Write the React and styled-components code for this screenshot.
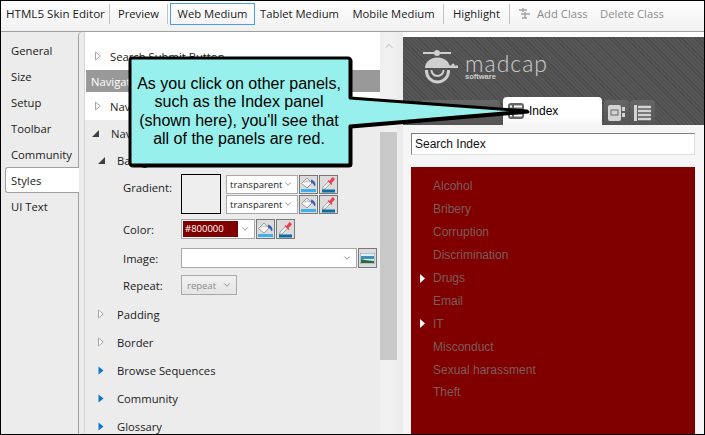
import React from "react";
import styled, { createGlobalStyle } from "styled-components";
import { ChevronDown, ChevronUp } from "lucide-react";

const uiFont = `"Open Sans", "Noto Sans", sans-serif`;
const webFont = `"Liberation Sans", Arial, sans-serif`;

const Global = createGlobalStyle`
	html, body {
		margin: 0;
		padding: 0;
		background: #fff;
	}
	* {
		box-sizing: border-box;
	}
`;

const Frame = styled.div`
	position: relative;
	width: 705px;
	height: 435px;
	display: flex;
	flex-direction: column;
	overflow: hidden;
	background: #ececec;
	border: 1px solid #000;
	font-family: ${uiFont};
	font-size: 11.25px;
	color: #1a1a1a;
	&::after {
		content: "";
		position: absolute;
		right: -1px;
		bottom: 0;
		width: 1px;
		height: 40px;
		background: #f5f5f5;
	}
`;

const Toolbar = styled.div`
	display: flex;
	align-items: center;
	height: 31px;
	flex: none;
	padding: 0 0 5px 5px;
	background: linear-gradient(#ffffff, #f0f0f0);
	border-bottom: 1px solid #a0a0a0;
`;
const ToolItem = styled.div`
	flex: none;
	display: flex;
	align-items: center;
	justify-content: ${(p) => (p.$left == null ? "center" : "flex-start")};
	gap: 6px;
	width: ${(p) => p.$w}px;
	height: 22px;
	padding-left: ${(p) => p.$left ?? 0}px;
	margin-left: ${(p) => (p.$active ? 2 : 0)}px;
	white-space: nowrap;
	color: ${(p) => (p.$disabled ? "#8c8c8c" : "#1a1a1a")};
	border: 1px solid ${(p) => (p.$active ? "#4a9cf0" : "transparent")};
`;
const TitleText = styled.span`
	font-size: 11.6px;
	margin-left: -1px;
`;
const ToolSep = styled.div`
	flex: none;
	width: 1px;
	height: 20px;
	background: #c4c4c4;
`;

const Body = styled.div`
	flex: 1;
	display: flex;
	min-height: 0;
`;

const Sidebar = styled.div`
	flex: none;
	width: 77px;
	padding: 5px 0 0 4px;
	display: flex;
	flex-direction: column;
`;
const SideItem = styled.div`
	position: relative;
	z-index: 1;
	height: 26px;
	display: flex;
	align-items: center;
	padding-left: 5px;
	margin-right: ${(p) => (p.$active ? "-1px" : "0")};
	background: ${(p) => (p.$active ? "#fff" : "transparent")};
	border: 1px solid ${(p) => (p.$active ? "#a0a0a0" : "transparent")};
	border-right: none;
	border-radius: 3px 0 0 3px;
`;

const Panel = styled.div`
	flex: 1;
	display: flex;
	min-width: 0;
	border-left: 1px solid #a0a0a0;
	border-top-left-radius: 4px;
	padding-left: 5px;
`;

const TreePane = styled.div`
	flex: none;
	width: 296px;
	padding-top: 10px;
	overflow: hidden;
	background: #fff;
	border-left: 1px solid #d4d4d4;
`;
const TreeRow = styled.div`
	display: flex;
	align-items: center;
	height: ${(p) => p.$h ?? 28}px;
	margin-top: ${(p) => p.$top ?? 0}px;
	padding-left: ${(p) => p.$indent ?? 7}px;
	white-space: nowrap;
`;
const ArrowSlot = styled.span`
	flex: none;
	width: ${(p) => p.$w ?? 19}px;
	display: flex;
	align-items: center;
`;
const SelectedRow = styled.div`
	height: 22px;
	display: flex;
	align-items: center;
	margin-left: 1px;
	padding-left: 5px;
	background: #999999;
	color: #fff;
`;
const GreySection = styled.div`
	background: #ececec;
	height: 320px;
`;

const FormRow = styled.div`
	display: flex;
	align-items: center;
	height: ${(p) => p.$h}px;
	margin-top: ${(p) => p.$top ?? 0}px;
	padding-left: 38px;
`;
const FieldLabel = styled.div`
	flex: none;
	width: 58px;
	margin-bottom: ${(p) => p.$raise ?? 0}px;
`;
const GradientBox = styled.div`
	flex: none;
	width: 40px;
	height: 40px;
	margin-right: 5px;
	background: #eee;
	border: 1px solid #000;
`;
const Stack = styled.div`
	display: flex;
	flex-direction: column;
	gap: 1px;
`;
const ControlRow = styled.div`
	display: flex;
	gap: 1px;
`;
const SelectBox = styled.div`
	display: flex;
	align-items: center;
	justify-content: space-between;
	width: ${(p) => p.$w}px;
	height: ${(p) => p.$h ?? 19}px;
	padding: 0 ${(p) => p.$padR ?? 4}px 0 ${(p) => p.$padL ?? 3}px;
	background: ${(p) => (p.$off ? "linear-gradient(#f2f2f2,#e4e4e4)" : "#fff")};
	color: ${(p) => (p.$off ? "#8a8a8a" : "#1a1a1a")};
	border: 1px solid #a8a8a8;
	font-size: 9.5px;
`;
const ColorValue = styled.div`
	width: 55px;
	height: 16px;
	margin-left: -2px;
	padding-left: 2px;
	line-height: 16px;
	background: #800000;
	color: #fff;
`;
const IconButton = styled.div`
	flex: none;
	width: 19px;
	height: ${(p) => p.$h ?? 19}px;
	display: flex;
	align-items: center;
	justify-content: center;
	background: #dcdcdc;
	border: 1px solid #787878;
`;

const ScrollTrack = styled.div`
	flex: none;
	width: 17px;
	display: flex;
	flex-direction: column;
	align-items: center;
	padding-top: 8px;
	background: #f0f0f0;
	color: #a6a6a6;
`;
const ScrollThumb = styled.div`
	width: 17px;
	height: 228px;
	margin-top: 80px;
	background: #c8c8c8;
`;

const PreviewPane = styled.div`
	flex: none;
	width: 301px;
	margin-left: 6px;
	display: flex;
	flex-direction: column;
	background: #f5f5f5;
	border-top: 5px solid #fff;
`;
const PreviewHead = styled.div`
	flex: none;
	height: 88px;
	padding: 13px 0 0 20px;
	display: flex;
	flex-direction: column;
	justify-content: space-between;
	background: repeating-linear-gradient(45deg, #4c4c4c 0 1px, #565656 1px 3px);
`;
const Logo = styled.div`
	display: flex;
	align-items: flex-start;
	gap: 6px;
	color: #cfcfcf;
`;
const LogoWords = styled.div`
	display: flex;
	flex-direction: column;
	margin-top: 3px;
`;
const LogoName = styled.div`
	font-family: "Lato", sans-serif;
	font-weight: 300;
	font-size: 23px;
	line-height: 21px;
	letter-spacing: 1px;
`;
const LogoSub = styled.div`
	font-family: ${webFont};
	font-weight: bold;
	font-size: 7.5px;
	line-height: 6px;
`;
const TabStrip = styled.div`
	display: flex;
	align-items: flex-end;
	gap: 1px;
	margin-left: -3px;
`;
const Tab = styled.div`
	height: ${(p) => (p.$active ? 28 : 25)}px;
	width: ${(p) => p.$w}px;
	margin-left: ${(p) => p.$left ?? 0}px;
	display: flex;
	align-items: center;
	gap: 5px;
	padding-left: ${(p) => (p.$active ? 5 : 0)}px;
	justify-content: ${(p) => (p.$active ? "flex-start" : "center")};
	border-radius: 4px 4px 0 0;
	background: ${(p) => (p.$active ? "linear-gradient(#fff 70%, #f5f5f5)" : "linear-gradient(#666,#555)")};
	font-family: ${webFont};
	font-size: 12px;
	color: #000;
`;
const SearchInput = styled.div`
	flex: none;
	height: 22px;
	margin: 8px 9px 0 8px;
	padding-left: 3px;
	line-height: 20px;
	font-family: ${webFont};
	font-size: 12px;
	color: #111;
	background: #fff;
	border: 1px solid #e0e0e0;
	border-top: 1px solid #808080;
	border-left: 1px solid #808080;
`;
const IndexPanel = styled.div`
	flex: 1;
	margin: 12px 9px 0 8px;
	padding-top: 8px;
	background: #800000;
	font-family: ${webFont};
	font-size: 12px;
`;
const IndexRow = styled.div`
	display: flex;
	align-items: center;
	height: 22.9px;
	color: #7c5c5c;
`;
const IndexArrow = styled.span`
	flex: none;
	width: 22px;
	padding-left: 9px;
	display: flex;
`;

const Callout = styled.div`
	position: absolute;
	left: 126px;
	top: 53px;
	width: 404px;
	height: 118px;
`;
const CalloutShape = styled.svg`
	position: absolute;
	inset: 0;
	filter: drop-shadow(1px 1px 0 #000);
`;
const CalloutText = styled.div`
	position: relative;
	width: 224px;
	height: 114px;
	padding-top: 21px;
	text-align: center;
	font-family: ${webFont};
	font-size: 16px;
	line-height: 18.4px;
	color: #000;
`;

const Tri = ({ kind }) => {
	if (kind === "open") {
		return (
			<svg width="8" height="9" viewBox="0 0 8 9">
				<path d="M7 1v7H0z" fill="#404040" />
			</svg>
		);
	}
	if (kind === "blue") {
		return (
			<svg width="6" height="9" viewBox="0 0 6 9">
				<path d="M.5.5l5 4-5 4z" fill="#0a78c8" />
			</svg>
		);
	}
	if (kind === "white") {
		return (
			<svg width="5" height="9" viewBox="0 0 5 9">
				<path d="M0 0l5 4.5L0 9z" fill="#fff" />
			</svg>
		);
	}
	return (
		<svg width="6" height="10" viewBox="0 0 6 10">
			<path d="M.5 1l4.8 4L.5 9z" fill="#fff" stroke="#a8a8a8" />
		</svg>
	);
};

const Bucket = () => (
	<svg width="17" height="17" viewBox="0 0 17 17">
		<path d="M1.500 7.500L7 2l5 5-5 5z" fill="#f6f6f6" stroke="#9c9c9c" />
		<path d="M4 6.500c2-2 4-2 6-.5" fill="none" stroke="#b8b8b8" />
		<path d="M11 3.500c2.500.5 4.500 2.500 4.500 5 0 1.500-1 2-1.500 1-.5-1.500-1.500-2.500-3-3z" fill="#3f62b8" />
		<rect x="1" y="13" width="15" height="3" fill="#3fb0ea" />
	</svg>
);

const Dropper = () => (
	<svg width="17" height="17" viewBox="0 0 17 17">
		<path d="M3 11l5.500-5.500 2 2L5 13l-2.500.5z" fill="#f0f0f0" stroke="#a4a4a4" />
		<path d="M8.500 4l1 1L12 1.500c1-1 3.500 1.500 2.500 2.500L11.500 7l1 1-1 1-4-4z" fill="#e8434f" />
		<rect x="2" y="13.500" width="13" height="3" fill="#0a6ea4" />
	</svg>
);

const ImageIcon = () => (
	<svg width="15" height="11" viewBox="0 0 15 11">
		<rect width="15" height="11" fill="#dfeef2" stroke="#7b9aa6" />
		<path d="M1 3h13v3H1z" fill="#3f8fb0" />
		<path d="M1 10V6l4 1 9 1v2z" fill="#2d6a3c" />
	</svg>
);

const AddClassIcon = () => (
	<svg width="13" height="13" viewBox="0 0 13 13">
		<path d="M1 3h8M5 1v4M3 7h9M7 5v6M4 11h5" stroke="#a4a4a4" strokeWidth="1.500" fill="none" />
	</svg>
);

const ListIcon = () => (
	<svg width="16" height="16" viewBox="0 0 16 16">
		<rect width="16" height="16" rx="3" fill="#666" />
		<path d="M2 3.500h2M6 3.500h8M2 8h2M6 8h8M2 12.500h2M6 12.500h8" stroke="#fff" strokeWidth="2" />
	</svg>
);

const BookIcon = () => (
	<svg width="17" height="16" viewBox="0 0 17 16">
		<rect width="13" height="16" rx="2" fill="#d4d4d4" />
		<rect x="3" y="5" width="7" height="5" fill="none" stroke="#666" />
		<rect x="14" y="2" width="3" height="4" fill="#d4d4d4" />
		<rect x="14" y="8" width="3" height="4" fill="#d4d4d4" />
	</svg>
);

const StackIcon = () => (
	<svg width="17" height="16" viewBox="0 0 17 16">
		<rect width="3" height="16" fill="#d4d4d4" />
		<path d="M4 2h13M4 6h13M4 10h13M4 14h13" stroke="#d4d4d4" strokeWidth="2.500" />
	</svg>
);

const LogoMark = () => (
	<svg width="36" height="35" viewBox="0 0 36 35" fill="#cfcfcf" stroke="none">
		<path d="M0 3h11M17 3h11" stroke="#cfcfcf" strokeWidth="2" />
		<circle cx="14" cy="3" r="3" />
		<path d="M2 18a12.500 10.500 0 0 1 25 0z" />
		<path d="M25 15.500h10v2.500H25z" />
		<circle cx="30" cy="15" r="1.500" />
		<path d="M3.500 20v1a11 11 0 0 0 22 0v-1" fill="none" stroke="#cfcfcf" strokeWidth="3" />
		<path d="M8.500 20a6 6 0 0 0 12 0" fill="none" stroke="#cfcfcf" strokeWidth="2" />
	</svg>
);

const Chevron = () => <ChevronDown size={10} strokeWidth={1.5} color="#555" />;

const ColorButtons = ({ h }) => (
	<>
		<IconButton $h={h}>
			<Bucket />
		</IconButton>
		<IconButton $h={h}>
			<Dropper />
		</IconButton>
	</>
);

const sideItems = ["General", "Size", "Setup", "Toolbar", "Community", "Styles", "UI Text"];
const indexItems = [
	["Alcohol"],
	["Bribery"],
	["Corruption"],
	["Discrimination"],
	["Drugs", true],
	["Email"],
	["IT", true],
	["Misconduct"],
	["Sexual harassment"],
	["Theft"],
];

const App = () => {
	return (
		<Frame>
			<Global />
			<Toolbar>
				<ToolItem $w={103} $left={0}>
					<TitleText>HTML5 Skin Editor</TitleText>
				</ToolItem>
				<ToolSep />
				<ToolItem $w={57}>Preview</ToolItem>
				<ToolSep />
				<ToolItem $w={85} $active>
					Web Medium
				</ToolItem>
				<ToolItem $w={89}>Tablet Medium</ToolItem>
				<ToolItem $w={99}>Mobile Medium</ToolItem>
				<ToolSep />
				<ToolItem $w={65}>Highlight</ToolItem>
				<ToolSep />
				<ToolItem $w={84} $left={7} $disabled>
					<AddClassIcon />
					Add Class
				</ToolItem>
				<ToolItem $w={76} $disabled>
					Delete Class
				</ToolItem>
			</Toolbar>
			<Body>
				<Sidebar>
					{sideItems.map((item) => (
						<SideItem key={item} $active={item === "Styles"}>
							{item}
						</SideItem>
					))}
				</Sidebar>
				<Panel>
					<TreePane>
						<TreeRow $indent={10}>
							<ArrowSlot $w={15}>
								<Tri />
							</ArrowSlot>
							Search Submit Button
						</TreeRow>
						<SelectedRow>Navigation</SelectedRow>
						<TreeRow $indent={10}>
							<ArrowSlot $w={15}>
								<Tri />
							</ArrowSlot>
							Navigation Link
						</TreeRow>
						<GreySection>
							<TreeRow $indent={7} $h={27}>
								<ArrowSlot>
									<Tri kind="open" />
								</ArrowSlot>
								Navigation Link
							</TreeRow>
							<TreeRow $indent={13} $h={27}>
								<ArrowSlot>
									<Tri kind="open" />
								</ArrowSlot>
								Background
							</TreeRow>
							<FormRow $h={40}>
								<FieldLabel $raise={14}>Gradient:</FieldLabel>
								<GradientBox />
								<Stack>
									<ControlRow>
										<SelectBox $w={72}>
											transparent
											<Chevron />
										</SelectBox>
										<ColorButtons />
									</ControlRow>
									<ControlRow>
										<SelectBox $w={72}>
											transparent
											<Chevron />
										</SelectBox>
										<ColorButtons />
									</ControlRow>
								</Stack>
							</FormRow>
							<FormRow $h={20} $top={5}>
								<FieldLabel>Color:</FieldLabel>
								<ControlRow>
									<SelectBox $w={74} $h={20}>
										<ColorValue>#800000</ColorValue>
										<Chevron />
									</SelectBox>
									<ColorButtons h={20} />
								</ControlRow>
							</FormRow>
							<FormRow $h={20} $top={9}>
								<FieldLabel>Image:</FieldLabel>
								<ControlRow>
									<SelectBox $w={176} $h={20}>
										<span />
										<Chevron />
									</SelectBox>
									<IconButton $h={20}>
										<ImageIcon />
									</IconButton>
								</ControlRow>
							</FormRow>
							<FormRow $h={20} $top={7}>
								<FieldLabel>Repeat:</FieldLabel>
								<SelectBox $w={56} $h={20} $off $padL={5}>
									repeat
									<Chevron />
								</SelectBox>
							</FormRow>
							<TreeRow $indent={13} $top={5}>
								<ArrowSlot>
									<Tri />
								</ArrowSlot>
								Padding
							</TreeRow>
							<TreeRow $indent={13}>
								<ArrowSlot>
									<Tri />
								</ArrowSlot>
								Border
							</TreeRow>
							<TreeRow $indent={13}>
								<ArrowSlot>
									<Tri kind="blue" />
								</ArrowSlot>
								Browse Sequences
							</TreeRow>
							<TreeRow $indent={13}>
								<ArrowSlot>
									<Tri kind="blue" />
								</ArrowSlot>
								Community
							</TreeRow>
							<TreeRow $indent={13}>
								<ArrowSlot>
									<Tri kind="blue" />
								</ArrowSlot>
								Glossary
							</TreeRow>
						</GreySection>
					</TreePane>
					<ScrollTrack>
						<ChevronUp size={12} strokeWidth={1.5} />
						<ScrollThumb />
					</ScrollTrack>
					<PreviewPane>
						<PreviewHead>
							<Logo>
								<LogoMark />
								<LogoWords>
									<LogoName>madcap</LogoName>
									<LogoSub>software</LogoSub>
								</LogoWords>
							</Logo>
							<TabStrip>
								<Tab $w={80} />
								<Tab $w={99} $left={2} $active>
									<ListIcon />
									Index
								</Tab>
								<Tab $w={25} $left={1}>
									<BookIcon />
								</Tab>
								<Tab $w={25}>
									<StackIcon />
								</Tab>
							</TabStrip>
						</PreviewHead>
						<SearchInput>Search Index</SearchInput>
						<IndexPanel>
							{indexItems.map(([name, hasArrow]) => (
								<IndexRow key={name}>
									<IndexArrow>{hasArrow && <Tri kind="white" />}</IndexArrow>
									{name}
								</IndexRow>
							))}
						</IndexPanel>
					</PreviewPane>
				</Panel>
			</Body>
			<Callout>
				<CalloutShape width="404" height="118" viewBox="0 0 404 118">
					<path
						d="M5 4H221a2 2 0 0 1 2 2V44L400 57 223 72V109a2 2 0 0 1-2 2H5a2 2 0 0 1-2-2V6a2 2 0 0 1 2-2z"
						fill="#97f0ec"
						stroke="#000"
						strokeWidth="3"
						strokeLinejoin="round"
					/>
				</CalloutShape>
				<CalloutText>
					As you click on other panels,
					<br />
					such as the Index panel
					<br />
					(shown here), you'll see that
					<br />
					all of the panels are red.
				</CalloutText>
			</Callout>
		</Frame>
	);
};

export default App;
